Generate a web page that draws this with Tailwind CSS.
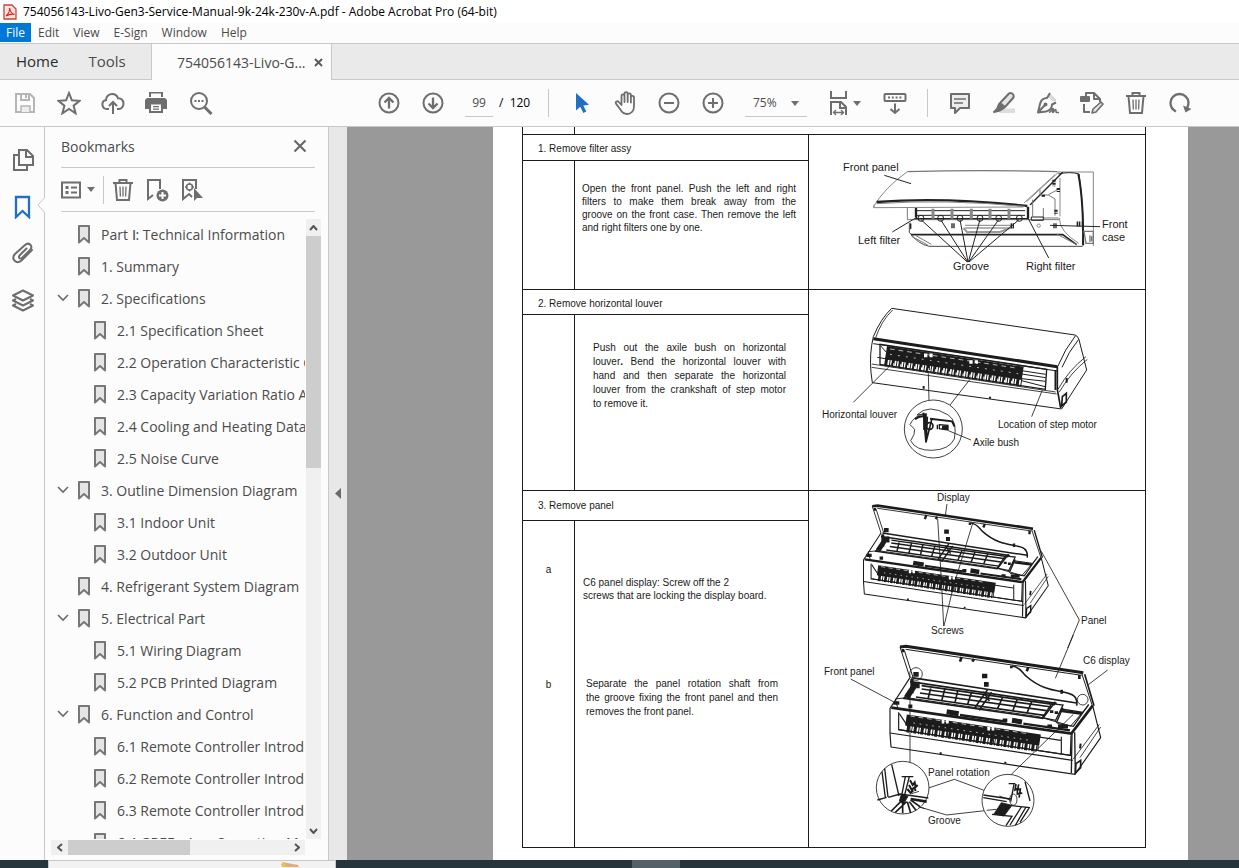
<!DOCTYPE html>
<html lang="en">
<head>
    <meta charset="UTF-8">
    <meta name="viewport" content="width=device-width, initial-scale=1.0">
    <title>754056143-Livo-Gen3-Service-Manual-9k-24k-230v-A.pdf - Adobe Acrobat Pro (64-bit)</title>
    <script src="https://cdn.jsdelivr.net/npm/@tailwindcss/browser@4"></script>
</head>
<body class="flex h-screen flex-col overflow-hidden bg-[#fcfcfc] font-['Open_Sans',sans-serif] text-[#4b4b4b]">

    <!-- Shared symbols -->
    <svg class="hidden">
        <symbol id="bookmark" viewBox="0 0 12 19"><path d="M1 1h10v16.500l-5-4.500-5 4.500z" fill="#e4e4e4" stroke="#777" stroke-width="2" stroke-linejoin="round"/></symbol>
        <symbol id="chevron" viewBox="0 0 12 8"><path d="M1 1l5 5 5-5" fill="none" stroke="#6a6a6a" stroke-width="1.600"/></symbol>
        <symbol id="trash" viewBox="0 0 24 24"><g fill="none" stroke="#6e6e6e" stroke-width="2"><path d="M2 5h20M8.500 4.500V2h7v2.500M4.500 5l1.500 17h12l1.500-17"/><path d="M9 8.500l.4 10M12 8.500v10M15 8.500l-.4 10" stroke-width="1.300"/></g></symbol>

        <!-- Open indoor unit, used in both step 3 drawings -->
        <symbol id="open-unit" viewBox="0 0 1035 460" overflow="visible">
            <g fill="none" stroke="#1c1c1c" stroke-width="3.500">
                <path d="M270 36l18-2 532 79" stroke-width="9"/>
                <path d="M287 43l528 78" stroke-width="3"/>
                <path d="M270 36l30 92M283 46l27 84M815 115l32 97" stroke-width="3"/>
                <path d="M824 118l28 94" stroke-width="5"/>
                <path d="M606 93c26 4 30 20 42 30 40 36 78 42 106 47 32 6 50 12 46 42" stroke-width="5"/>
                <path d="M455 66l-5 14M492 72l-5 8M655 97l-5 12M604 92v8M808 120v12M755 164v12M279 42v10" stroke-width="8"/>
                <!-- intake grille -->
                <path d="M305 128l495 76M300 140l440 65" stroke-width="5"/>
                <path d="M335 152l400 57M335 162l390 54M330 174l380 53M318 186l385 55" stroke-width="5"/>
                <path d="M320 142l-38 48 416 60 38-50" stroke-width="5"/>
                <path d="M318 145l-28 42" stroke-width="17"/>
                <path d="M362 160l-8 32M405 160l-10 38M443 168l-8 35M485 170l-12 38M578 186l-15 34M622 192l-14 36M665 200l-14 34" stroke-width="5"/>
                <path d="M532 165l-38 54M545 172l-38 54M520 170l18 28" stroke-width="5"/>
                <path d="M516 123h16M522 148h14M310 118h16" stroke-width="14"/>
                <path d="M306 132v43M324 140v20" stroke-width="10"/>
                <path d="M725 206l-28 42 40 8 22-46zM759 218l-20 46M752 222l68 10M742 266l48 8 46-66" stroke-width="4"/>
                <path d="M756 228l60 8M720 230h10M734 233h10" stroke-width="8"/>
                <path d="M300 128l-60 92v75l3 42"/>
                <path d="M244 218l540 78 64-84" stroke-width="8"/>
                <path d="M264 222l-8-30 34-4 396 57 96 28 54-62" stroke-width="3"/>
                <path d="M250 204h18M295 214h12M578 256h14M712 274h14M744 275h30" stroke-width="11"/>
                <path d="M410 230l36 6M606 256l30 5" stroke-width="15"/>
                <path d="M450 240l140 20M640 266l140 20" stroke-width="7"/>
                <!-- outlet with guide blades -->
                <path d="M266 232v52l515 77 2-60"/>
                <path d="M288 255l402 60" stroke-width="34"/>
                <path d="M291 276l392 59" stroke-width="32" stroke-dasharray="9 5 3 4"/>
                <path d="M300 243l360 54" stroke="#fff" stroke-width="2" stroke-dasharray="14 12"/>
                <path d="M310 264l350 52" stroke="#fff" stroke-width="2" stroke-dasharray="5 14"/>
                <path d="M395 260h22M532 281h22" stroke="#fff" stroke-width="11" stroke-dasharray="8 5"/>
                <path d="M268 236l28 42M680 305l72 11M754 305v50M412 270v35M550 290v35M684 300v44M266 284l520 78"/>
                <path d="M240 294l548 82M243 336l552 82 77-110-24-96"/>
                <path d="M786 296l-2 118M794 292l2 124" stroke-width="4"/>
                <path d="M868 268l-78 104M872 276l-62 92" stroke-width="2.500"/>
                <path d="M812 326l-2 14M392 352v8M586 380v6" stroke-width="6"/>
                <path d="M798 386l14-10v22l-16 16z" stroke-width="5"/>
            </g>
        </symbol>
    </svg>

    <!-- Title bar -->
    <header class="flex h-[23px] shrink-0 items-center gap-[6px] bg-white pl-[3px] text-black">
        <svg class="h-4 w-[14px]" viewBox="0 0 14 16"><path d="M1 1h8l4 4v10H1z" fill="#fbe3df" stroke="#c5473c" stroke-width="1.300"/><path d="M3 12c2-1.500 4-5 3.500-8 .5 3 2 5.500 5 6.500-3-.8-6 .2-8.500 1.500z" fill="none" stroke="#d0281c" stroke-width="1.200"/></svg>
        <h1 class="text-[12px] leading-4 whitespace-nowrap">754056143-Livo-Gen3-Service-Manual-9k-24k-230v-A.pdf - Adobe Acrobat Pro (64-bit)</h1>
    </header>

    <!-- Menu bar -->
    <nav class="flex h-[20px] shrink-0 items-start text-[12px] leading-[19px]">
        <button class="bg-[#0078d7] px-[6px] text-white">File</button>
        <button class="px-[7px]">Edit</button>
        <button class="px-[7px]">View</button>
        <button class="px-[7px]">E-Sign</button>
        <button class="px-[7px]">Window</button>
        <button class="px-[7px]">Help</button>
    </nav>

    <!-- Tabs -->
    <div class="flex h-[37px] shrink-0 border-t border-[#c8c8c8] bg-[#eaeaea] text-[14px]">
        <div class="flex w-[152px] items-center gap-[30px] border-r border-b border-[#c8c8c8] pl-4 text-[15px]">
            <button class="text-[#2c2c2c]">Home</button>
            <button>Tools</button>
        </div>
        <div class="flex w-[179px] items-center justify-between bg-[#fcfcfc] pr-2 pl-[25px]">
            <span>754056143-Livo-G...</span>
            <button aria-label="Close tab"><svg class="size-[9px]" viewBox="0 0 9 9"><path d="M1 1l7 7M8 1L1 8" stroke="#5c5c5c" stroke-width="2"/></svg></button>
        </div>
        <div class="flex-1 border-b border-l border-[#c8c8c8]"></div>
    </div>

    <!-- Toolbar -->
    <div class="flex h-[47px] shrink-0 items-center border-b border-[#c8c8c8] pl-[3px] text-[12px]">
        <button class="flex w-11 justify-center" aria-label="Save"><svg class="size-6" viewBox="0 0 24 24" fill="none" stroke="#b5b5b5" stroke-width="2"><path d="M3 3h14l4 4v14H3z"/><path d="M8 3v6h8V3M13 4v3"/><path d="M8 21v-6h9v6" fill="#eee" stroke-width="1.500"/></svg></button>
        <button class="flex w-11 justify-center" aria-label="Star"><svg class="size-6" viewBox="0 0 24 24" fill="none" stroke="#6e6e6e" stroke-width="2"><path d="M12 2l2.900 7.300 7.700.5-6 4.900 2 7.600L12 18l-6.600 4.300 2-7.600-6-4.900 7.700-.5z"/></svg></button>
        <button class="flex w-11 justify-center" aria-label="Upload"><svg class="size-6" viewBox="0 0 24 24" fill="none" stroke="#6e6e6e" stroke-width="2"><path d="M8 18H6a4.500 4.500 0 0 1-1-8.900C4.800 5.500 8 3 11.200 3c3 0 5 1.800 5.800 4.300 3-.3 5.500 2 5.500 5.200S20.300 18 18 18h-2"/><path d="M12 23V11M8 15l4-4 4 4"/></svg></button>
        <button class="flex w-11 justify-center" aria-label="Print"><svg class="size-6" viewBox="0 0 24 24" fill="#6e6e6e"><path d="M4 1h14v5H4zM2 7h18l2 2v9h-4v-5H4v5H0V9z"/><path d="M6 2.500h10V7H6z" fill="#fcfcfc"/><path d="M4 13h14v9H4z"/><path d="M6 13.500h10V20H6z" fill="#fcfcfc"/><path d="M8 15h6v1.200H8zM8 17.500h6v1.200H8z"/></svg></button>
        <button class="flex w-11 justify-center" aria-label="Find"><svg class="size-6" viewBox="0 0 24 24" fill="none" stroke="#6e6e6e" stroke-width="2"><circle cx="10" cy="10" r="8"/><path d="M15.500 16l7 7" stroke-width="3"/><path d="M5.500 10h9" stroke-dasharray="2 1.500"/></svg></button>

        <button class="ml-[144px] flex w-11 justify-center" aria-label="Previous page"><svg class="size-6" viewBox="0 0 24 24" fill="none" stroke="#6e6e6e" stroke-width="2"><circle cx="12" cy="12" r="9.500"/><path d="M12 17.500V7M7.500 11.500L12 7l4.500 4.500" stroke-width="2.300"/></svg></button>
        <button class="flex w-11 justify-center" aria-label="Next page"><svg class="size-6" viewBox="0 0 24 24" fill="none" stroke="#6e6e6e" stroke-width="2"><circle cx="12" cy="12" r="9.500"/><path d="M12 6.500V17M7.500 12.500L12 17l4.500-4.500" stroke-width="2.300"/></svg></button>
        <input class="ml-[10px] h-[28px] w-7 border-b border-[#c8c8c8] text-center" aria-label="Page number" value="99">
        <span class="ml-[6px] w-[49px] whitespace-pre text-black">/  120</span>
        <span class="h-7 w-px bg-[#c8c8c8]"></span>
        <button class="ml-[10px] flex w-11 justify-center" aria-label="Select"><svg class="size-6" viewBox="0 0 24 24"><path d="M7 2v17.500l4.300-3.800 3 6.300 3-1.400-3-6.200 5.700-.6z" fill="#1f70c1"/></svg></button>
        <button class="flex w-11 justify-center" aria-label="Pan"><svg class="size-6" viewBox="0 0 24 24" fill="none" stroke="#6e6e6e" stroke-width="1.800" stroke-linejoin="round" stroke-linecap="round"><path d="M8.500 14V5c0-2.300 3-2.300 3 0v6V2.800c0-2.300 3.200-2.300 3.200 0V11 4c0-2.300 3.200-2.300 3.200 0v7.500-5c0-2.200 3.100-2.200 3.100 0V15c0 5-3 8-7 8-3.500 0-5-1.500-6.500-4.200L3 12.600c-1-2 1.500-3.200 2.800-1.600z"/></svg></button>
        <button class="flex w-11 justify-center" aria-label="Zoom out"><svg class="size-6" viewBox="0 0 24 24" fill="none" stroke="#6e6e6e" stroke-width="2"><circle cx="12" cy="12" r="9.500"/><path d="M7 12h10"/></svg></button>
        <button class="flex w-11 justify-center" aria-label="Zoom in"><svg class="size-6" viewBox="0 0 24 24" fill="none" stroke="#6e6e6e" stroke-width="2"><circle cx="12" cy="12" r="9.500"/><path d="M7 12h10M12 7v10"/></svg></button>
        <div class="relative ml-[10px] w-[62px]">
            <select class="h-[28px] w-full appearance-none border-b border-[#c8c8c8] pl-2" aria-label="Zoom"><option>75%</option><option>100%</option></select>
            <svg class="pointer-events-none absolute top-3 right-2 h-[5px] w-2" viewBox="0 0 8 5"><path d="M0 0h8L4 5z" fill="#6e6e6e"/></svg>
        </div>
        <button class="ml-[22px] flex w-8 items-center justify-between" aria-label="Fit page">
            <svg class="h-[26px] w-[19px]" viewBox="0 0 19 26" fill="none" stroke="#6e6e6e" stroke-width="2"><path d="M2 1v7h15V1M2 25V12h10l5 5v8M11 12v6h6"/><path d="M4 22.500h11M7 20l-2.500 2.500L7 25M12 20l2.500 2.500L12 25" stroke-width="1.300"/></svg>
            <svg class="h-[5px] w-2" viewBox="0 0 8 5"><path d="M0 0h8L4 5z" fill="#6e6e6e"/></svg>
        </button>
        <button class="ml-3 flex w-11 justify-center" aria-label="Reading mode"><svg class="size-6" viewBox="0 0 24 24" fill="none" stroke="#6e6e6e" stroke-width="2"><rect x="1.500" y="3" width="21" height="7" rx="1"/><path d="M5 6.500h15" stroke-dasharray="2 1.800"/><path d="M12 12.500V22M7.500 18l4.500 4 4.500-4"/></svg></button>
        <span class="ml-[10px] h-7 w-px bg-[#c8c8c8]"></span>
        <button class="ml-[10px] flex w-11 justify-center" aria-label="Comment"><svg class="size-6" viewBox="0 0 24 24" fill="#ededed" stroke="#6e6e6e" stroke-width="2" stroke-linejoin="round"><path d="M3 3h18v14h-9l-5 5v-5H3z"/><path d="M6 8h12M6 12h9" stroke-width="1.300"/></svg></button>
        <button class="flex w-11 justify-center" aria-label="Highlight"><svg class="size-6" viewBox="0 0 24 24" fill="none" stroke="#6e6e6e" stroke-width="2" stroke-linejoin="round"><path d="M10 17.500h13V22H7z" fill="#ddd" stroke="none"/><path d="M8 12l8.500-9c2-2 6-.5 5 3.500L13 16z" fill="#e4e4e4"/><path d="M7 13l5 4-4 2.500L2 21l3-3z" fill="#6e6e6e"/></svg></button>
        <button class="flex w-11 justify-center" aria-label="Sign"><svg class="size-6" viewBox="0 0 24 24" fill="none" stroke="#6e6e6e" stroke-width="2" stroke-linejoin="round"><path d="M14 3l6 6-3 1-5-5z" fill="#ddd" stroke="#ccc" stroke-width="1"/><path d="M14 2l-3 5c-4 0-6 2-7 6l-2 8.500 8-1c4-1 6-3 6-7l4-2M2 21.500l6.500-7"/><circle cx="9.500" cy="13.500" r="1"/><path d="M13 21.500c3-1 3-4 4-4s-1 4 0 4 1.500-3 2.500-3 0 3 1 3H23" stroke-width="1.600"/></svg></button>
        <button class="flex w-11 justify-center" aria-label="Edit PDF"><svg class="size-6" viewBox="0 0 24 24" fill="none" stroke="#6e6e6e" stroke-width="2" stroke-linejoin="round"><path d="M6 5V2h8l6 6v3M14 2v6h5M4 13v8h6"/><rect x="1" y="6" width="8" height="4" fill="#6e6e6e"/><path d="M12 22l1-4 8-7 2 2-7 8z" fill="#e4e4e4" stroke-width="1.600"/></svg></button>
        <button class="flex w-11 justify-center" aria-label="Delete"><svg class="size-6"><use href="#trash"/></svg></button>
        <button class="flex w-11 justify-center" aria-label="Rotate"><svg class="size-6" viewBox="0 0 24 24" fill="none" stroke="#6e6e6e" stroke-width="2.300"><path d="M8 20.500C4 18.500 2.500 15 2.500 12c0-5 4-9 9-9s9 4 9 8.500c0 2-.5 4-1.500 5.500"/><path d="M15 14.500l2.500 7 6-3.500z" fill="#6e6e6e" stroke="none"/></svg></button>
    </div>

    <!-- Workspace -->
    <main class="flex min-h-0 flex-1">
        <nav class="relative flex w-[45px] shrink-0 flex-col items-center gap-[23px] border-r border-[#c8c8c8] pt-[21px] pl-px">
            <button aria-label="Page thumbnails"><svg class="size-6" viewBox="0 0 24 24" fill="none" stroke="#6e6e6e" stroke-width="2"><path d="M8 2h8l6 6v9H8zM15 2v7h7M7 7H3v15h13v-4"/></svg></button>
            <button aria-label="Bookmarks"><svg class="size-6" viewBox="0 0 24 24" fill="none" stroke="#1f70c1" stroke-width="2.300"><path d="M5 2h13v20l-6.500-6L5 22z"/></svg></button>
            <button aria-label="Attachments"><svg class="size-6" viewBox="0 0 24 24" fill="none" stroke="#6e6e6e" stroke-width="2" stroke-linecap="round"><path d="M15.500 6.500l-7 7c-1.500 2 .5 4 2.500 2.500l8-8c3.500-4-1-8.500-5-5L4 12c-4.500 5 1.500 11 6.500 6.500L21 8"/></svg></button>
            <button aria-label="Layers"><svg class="size-6" viewBox="0 0 24 24" fill="none" stroke="#6e6e6e" stroke-width="2" stroke-linejoin="round"><path d="M12 1.500l10 5-10 5-10-5z"/><path d="M5 10l-3 1.500 10 5 10-5-3-1.500M5 15l-3 1.500 10 5 10-5-3-1.500"/></svg></button>
            <svg class="absolute top-[70px] -right-px h-4 w-2" viewBox="0 0 8 16"><path d="M8 0L1 8l7 8" fill="#fcfcfc" stroke="#c8c8c8"/></svg>
        </nav>

        <aside class="flex w-[284px] shrink-0 flex-col border-r border-[#c8c8c8]">
            <div class="mr-[13px] ml-4 flex h-[41px] items-center justify-between border-b border-[#c8c8c8] pr-2 pb-[2px]">
                <h2 class="text-[14px]">Bookmarks</h2>
                <button aria-label="Close panel"><svg class="size-[14px]" viewBox="0 0 14 14"><path d="M1.500 1.500l11 11M12.500 1.500l-11 11" stroke="#6a6a6a" stroke-width="2.200"/></svg></button>
            </div>
            <div class="mr-[13px] ml-4 flex h-[44px] items-center border-b border-[#c8c8c8]">
                <button class="flex items-center gap-[6px]" aria-label="Options">
                    <svg class="h-[18px] w-5" viewBox="0 0 20 18" fill="none" stroke="#6e6e6e" stroke-width="2"><path d="M1 1.500h18v15H1z"/><path d="M4.500 6.500h3M4.500 11.500h3" stroke-width="3"/><path d="M10 6.500h6M10 11.500h6"/></svg>
                    <svg class="h-[5px] w-2" viewBox="0 0 8 5"><path d="M0 0h8L4 5z" fill="#6e6e6e"/></svg>
                </button>
                <span class="ml-2 h-7 w-px bg-[#c8c8c8]"></span>
                <button class="ml-[7px]" aria-label="Delete bookmark"><svg class="size-6"><use href="#trash"/></svg></button>
                <button class="ml-[10px]" aria-label="New bookmark"><svg class="size-6" viewBox="0 0 24 24"><path d="M15 11V2H3v19l5-4" fill="none" stroke="#6e6e6e" stroke-width="2"/><circle cx="17.500" cy="17.500" r="6" fill="#6e6e6e"/><path d="M14 17.500h7M17.500 14v7" stroke="#fff" stroke-width="2"/></svg></button>
                <button class="ml-[11px]" aria-label="Find current bookmark"><svg class="size-6" viewBox="0 0 24 24"><g fill="none" stroke="#6e6e6e" stroke-width="2"><path d="M16 11V2H3v19l6-5 3 3"/><circle cx="9.500" cy="9" r="3" stroke-width="1.500"/><path d="M9.500 4.500V7M9.500 11v2.500M5 9h2.500M11.500 9H14" stroke-width="1.300"/></g><path d="M14 10v13l3-3h6z" fill="#6e6e6e"/></svg></button>
            </div>

            <div class="mt-[7px] mr-[7px] ml-[6px] flex min-h-0 flex-1">
                <ul id="bookmark-list" class="mr-px min-w-0 flex-1 overflow-hidden text-[14px]"></ul>
                <div class="flex w-[15px] shrink-0 flex-col items-center bg-[#f0f0f0]">
                    <button class="flex h-[17px] items-center" aria-label="Scroll up"><svg class="h-[6px] w-[9px]" viewBox="0 0 9 6"><path d="M1 5l3.500-4L8 5" fill="none" stroke="#555" stroke-width="2"/></svg></button>
                    <span class="h-[232px] w-full bg-[#cdcdcd]"></span>
                    <button class="mt-auto flex h-[17px] items-center" aria-label="Scroll down"><svg class="h-[6px] w-[9px]" viewBox="0 0 9 6"><path d="M1 1l3.500 4L8 1" fill="none" stroke="#555" stroke-width="2"/></svg></button>
                </div>
            </div>
            <div class="mt-px mr-[23px] mb-[5px] ml-[6px] flex h-[15px] shrink-0 items-center bg-[#f0f0f0]">
                <button class="flex w-[17px] justify-center" aria-label="Scroll left"><svg class="h-[9px] w-[6px]" viewBox="0 0 6 9"><path d="M5 1L1 4.500 5 8" fill="none" stroke="#555" stroke-width="2"/></svg></button>
                <span class="h-full w-[122px] bg-[#cdcdcd]"></span>
                <button class="ml-auto flex w-[17px] justify-center" aria-label="Scroll right"><svg class="h-[9px] w-[6px]" viewBox="0 0 6 9"><path d="M1 1l4 3.500L1 8" fill="none" stroke="#555" stroke-width="2"/></svg></button>
            </div>
        </aside>

        <button class="flex w-[18px] shrink-0 items-center justify-center bg-[#e8e8e8]" aria-label="Collapse panel"><svg class="h-[11px] w-[6px]" viewBox="0 0 6 11"><path d="M6 0v11L0 5.500z" fill="#6a6a6a"/></svg></button>

        <!-- Document -->
        <section class="min-w-0 flex-1 overflow-hidden bg-[#999] pr-[51px] pl-[146px]">
            <div class="h-full bg-white pr-[42px] pl-[29px] font-['Liberation_Sans',Arial,sans-serif] text-[10px] text-[#1a1a1a]">
                <table class="w-full table-fixed border-collapse">
                    <colgroup><col class="w-[52px]"><col class="w-[234px]"><col></colgroup>
                    <tbody>
                        <tr class="h-[7px]">
                            <td class="border border-t-0 border-[#1c1c1c] p-0"></td>
                            <td class="border border-t-0 border-[#1c1c1c] p-0" colspan="2"></td>
                        </tr>
                        <tr class="h-[26px]">
                            <td class="border border-[#1c1c1c] pt-[2px] pr-0 pb-0 pl-[15px]" colspan="2">1. Remove filter assy</td>
                            <td class="border border-[#1c1c1c] p-0 align-top" rowspan="2">
                                <svg class="block h-[154px] w-[336px]" viewBox="809 135 336 154">
                                    <g transform="translate(810 128) scale(.33333)" fill="none" stroke="#222" stroke-width="3">
                                        <path d="M742 132h108v222" stroke="#888"/>
                                        <path d="M292 131q225-6 450 0" stroke="#777" stroke-width="4"/>
                                        <path d="M292 131q-70 50-102 106M745 133l-95 88M735 140l-92 84" stroke="#888"/>
                                        <path d="M200 222q200-16 452 12" stroke-width="7"/>
                                        <path d="M200 227q200-14 445 8M190 239l450-2M192 230v10" stroke="#888"/>
                                        <path d="M758 133l-98 98" stroke-width="4"/>
                                        <path d="M745 138q35-8 62 0 14 100 14 214"/>
                                        <path d="M805 138q16 80 14 214" stroke-width="6"/>
                                        <path d="M750 150v115M748 270q0 40 58 76" stroke="#888"/>
                                        <path d="M292 240v35h455M318 240v34" stroke="#777"/>
                                        <path d="M320 248h325M320 262h325" stroke-width="3"/>
                                        <path d="M316 272h340" stroke-width="4"/>
                                        <path d="M318 240v28M654 236v34" stroke-width="7"/>
                                        <path d="M369 242v30M426 242v30M484 242v30M540 242v30M597 242v30" stroke="#888" stroke-width="9"/>
                                        <path d="M668 215v50M690 185v16h25l20 12v50M715 200l30-16M700 240v30h46" stroke="#777"/>
                                        <path d="M732 155v20M745 180v12M700 200v8M738 245v12" stroke-width="10" stroke-dasharray="6 3"/>
                                        <path d="M664 267h36v10h-36z"/>
                                        <g><circle cx="333" cy="271" r="9"/><circle cx="392" cy="271" r="9"/><circle cx="450" cy="271" r="9"/><circle cx="510" cy="271" r="9"/><circle cx="566" cy="271" r="9"/><circle cx="628" cy="271" r="9"/></g>
                                        <path d="M298 285v28q25 35 60 42h460" stroke="#444"/>
                                        <path d="M303 320h455l42 30" stroke-width="5"/>
                                        <path d="M305 325l48 26M318 323l46 26M302 284v20M740 318l60 32" stroke="#777"/>
                                        <path d="M465 292h145M465 300h145" stroke="#999" stroke-width="4"/>
                                        <path d="M475 312h95l30-12M460 300l15 16" stroke="#999" stroke-width="6"/>
                                        <path d="M424 293h12M602 293h12M730 293h12M800 288h14M300 295h6" stroke-width="15" stroke-dasharray="4 2"/>
                                        <circle cx="686" cy="293" r="5" stroke="#888"/>
                                        <path d="M822 310h28v36h-22zM840 322v20M845 325v15" stroke="#777" stroke-width="4"/>
                                        <path d="M223 142l80 25M247 312l75-45M472 402L333 275M473 402l-81-127M474 402l-24-127M475 402l35-127M476 402l90-127M477 402l150-127M716 390l-62-120M720 292l150 4"/>
                                    </g>
                                    <g font-size="11" fill="#1a1a1a">
                                        <text x="843" y="171">Front panel</text>
                                        <text x="858" y="244">Left filter</text>
                                        <text x="953" y="270">Groove</text>
                                        <text x="1026" y="270">Right filter</text>
                                        <text x="1102" y="228">Front</text>
                                        <text x="1102" y="241">case</text>
                                    </g>
                                </svg>
                            </td>
                        </tr>
                        <tr class="h-[129px]">
                            <td class="border border-[#1c1c1c] p-0"></td>
                            <td class="border border-[#1c1c1c] pt-[21px] pr-3 pb-0 pl-[7px] align-top">
                                <p class="leading-[13px] [text-align-last:justify]">
                                    <span class="block">Open the front panel. Push the left and right</span>
                                    <span class="block">filters to make them break away from the</span>
                                    <span class="block">groove on the front case. Then remove the left</span>
                                    <span class="block [text-align-last:left]">and right filters one by one.</span>
                                </p>
                            </td>
                        </tr>
                        <tr class="h-[25px]">
                            <td class="border border-[#1c1c1c] pt-1 pr-0 pb-0 pl-[15px]" colspan="2">2. Remove horizontal louver</td>
                            <td class="border border-[#1c1c1c] p-0 align-top" rowspan="2">
                                <svg class="block h-[200px] w-[336px]" viewBox="809 290 336 200">
                                    <g transform="translate(810 290) scale(.33333)" fill="none" stroke="#1c1c1c" stroke-width="3">
                                        <path d="M187 278q-10-60-2-112l5-26q22-54 55-85l550 80q8 2 12 14l23 91-75 117z"/>
                                        <path d="M248 60q-34 32-52 86" stroke-width="2.500"/>
                                        <path d="M190 146l552 84" stroke-width="9"/>
                                        <path d="M190 161l552 82M744 228q20-50 52-90M756 232q20-48 50-84" stroke-width="3"/>
                                        <path d="M742 228v70l10 56M736 240v60" stroke-width="5"/>
                                        <path d="M210 163v60l496 75 4-60z" stroke-width="4"/>
                                        <path d="M228 188l410 62" stroke-width="40"/>
                                        <path d="M224 215l412 62" stroke-width="26" stroke-dasharray="9 5 3 4"/>
                                        <path d="M240 177l385 58" stroke="#fff" stroke-width="2" stroke-dasharray="14 12"/>
                                        <path d="M240 193l385 58" stroke="#fff" stroke-width="2" stroke-dasharray="6 18"/>
                                        <path d="M342 196h28M478 216h28" stroke="#fff" stroke-width="11" stroke-dasharray="10 6"/>
                                        <path d="M250 223l360 54" stroke="#fff" stroke-width="8" stroke-dasharray="3 18"/>
                                        <path d="M212 168l20 22M202 202l35 6M358 200v40M496 220v45M635 242l72 11M635 252l72 11M635 266l72 8M635 272l70 18"/>
                                        <path d="M185 222l552 84M185 232l555 80M828 200q-50 38-84 98M832 208q-50 40-84 98" stroke-width="2.500"/>
                                        <path d="M770 264v14M341 288v8M540 320v6" stroke-width="6"/>
                                        <path d="M757 320l12-10v26l-14 12z" stroke-width="5"/>
                                        <path d="M130 337l122-122M355 250l2 80M480 268l-60 77M697 300l-32 80M415 422l68 28" stroke-width="2.500"/>
                                        <circle cx="370" cy="417" r="87" stroke-width="2.500"/>
                                        <path d="M342 372q-30 5-42 32l14 14q2 14-12 34 15 30 65 29 50-2 66-34 10-52-18-72-60-36-94 0z" stroke-width="2.500"/>
                                        <path d="M315 388q15-12 30-8M360 386l66 8 8 16" stroke-width="6"/>
                                        <path d="M340 368l8 90M352 380l-4 76M366 386l-18 70" stroke-width="5"/>
                                        <path d="M345 370v50" stroke-width="11"/>
                                        <circle cx="359" cy="408" r="10" stroke-width="5"/>
                                        <path d="M382 404v14M388 404l26 2v14l-26-4z" stroke-width="4"/>
                                        <path d="M396 412h18" stroke-width="11"/>
                                    </g>
                                    <g font-size="10" fill="#1a1a1a">
                                        <text x="822" y="418">Horizontal louver</text>
                                        <text x="998" y="428">Location of step motor</text>
                                        <text x="973" y="446">Axile bush</text>
                                    </g>
                                </svg>
                            </td>
                        </tr>
                        <tr class="h-[176px]">
                            <td class="border border-[#1c1c1c] p-0"></td>
                            <td class="border border-[#1c1c1c] pt-[26px] pr-[22px] pb-0 pl-[18px] align-top">
                                <p class="leading-[14px] [text-align-last:justify]">
                                    <span class="block">Push out the axile bush on horizontal</span>
                                    <span class="block">louver<b>.</b> Bend the horizontal louver with</span>
                                    <span class="block">hand and then separate the horizontal</span>
                                    <span class="block">louver from the crankshaft of step motor</span>
                                    <span class="block [text-align-last:left]">to remove it.</span>
                                </p>
                            </td>
                        </tr>
                        <tr class="h-[30px]">
                            <td class="border border-[#1c1c1c] py-0 pr-0 pl-[15px]" colspan="2">3. Remove panel</td>
                            <td class="border border-[#1c1c1c] p-0 align-top" rowspan="3">
                                <svg class="block h-[356px] w-[336px]" viewBox="809 491 336 356">
                                    <g transform="translate(810 488) scale(.33333)" fill="none" stroke="#1c1c1c" stroke-width="2.500">
                                        <g transform="translate(-50 23) scale(.877)"><use href="#open-unit" width="1035" height="460"/></g>
                                        <path d="M411 48l-5 34M383 92l12 200 6 122M488 106l-58 190-28 118M694 190l114 206-35 84"/>
                                    </g>
                                    <g transform="translate(810 635) scale(.33333)" fill="none" stroke="#1c1c1c" stroke-width="2.500">
                                        <use href="#open-unit" width="1035" height="460"/>
                                        <path d="M790 0l-54 130M893 105l-58 44M122 132l128 68M300 175v208M790 238L604 418M305 476l128-43 165 61M325 515l85 25 150-17"/>
                                        <circle cx="318" cy="117" r="19"/><circle cx="818" cy="194" r="16"/>
                                        <circle cx="278" cy="458" r="79" fill="#fff"/>
                                        <path d="M224 400l10 86M216 410l10 78M245 388l22 95M230 487l-28 8M235 487l35-10 85 12" stroke-width="4"/>
                                        <path d="M302 492l48 8" stroke-width="8"/>
                                        <path d="M286 425l-12 62M298 425l-18 70M275 425h35" stroke-width="4"/>
                                        <path d="M300 436l8 14 6-8 3 14 6-6M297 450l8 14 8-6 4 10M292 462l10 12 8-8" stroke-width="6"/>
                                        <path d="M282 490l-38 38M290 500l-34 32M278 505v30M292 500l10 34M298 500l20 26M302 495l28 20" stroke-width="5"/>
                                        <path d="M274 478l20 6-14 24-12-10z" fill="#1c1c1c"/>
                                        <circle cx="594" cy="496" r="78" fill="#fff"/>
                                        <path d="M520 480l82 12M520 488l70 12M602 500l10-52M596 446h20M645 440l15 58" stroke-width="4"/>
                                        <path d="M618 447l-3 18 7-4 0 16 8-3-3 14M626 448l-3 16 8-2-2 14 8-2" stroke-width="5"/>
                                        <ellipse cx="610" cy="494" rx="11" ry="17"/>
                                        <path d="M574 503l32 8-24 32-30-6z" fill="#1c1c1c"/>
                                        <path d="M546 538l60 6-18 28M606 512l54 6M634 516l-34 54M648 516l-32 55M658 518l-28 44" stroke-width="4"/>
                                        <path d="M305 476l22-7M598 494l-30-11M325 515l20 6M560 523l-30 3"/>
                                    </g>
                                    <g font-size="10" fill="#1a1a1a">
                                        <text x="937" y="501">Display</text>
                                        <text x="931" y="634">Screws</text>
                                        <text x="1081" y="624">Panel</text>
                                        <text x="824" y="675">Front panel</text>
                                        <text x="1083" y="664">C6 display</text>
                                        <text x="928" y="776">Panel rotation</text>
                                        <text x="928" y="824">Groove</text>
                                    </g>
                                </svg>
                            </td>
                        </tr>
                        <tr class="h-[120px]">
                            <td class="border-x border-[#1c1c1c] px-0 pt-[41px] pb-0 text-center align-top">a</td>
                            <td class="border-x border-[#1c1c1c] pt-[55px] pr-0 pb-0 pl-2 align-top">
                                <p class="leading-[13px]">C6 panel display: Screw off the 2<br>screws that are locking the display board.</p>
                            </td>
                        </tr>
                        <tr class="h-[207px]">
                            <td class="border-x border-b border-[#1c1c1c] px-0 pt-[37px] pb-0 text-center align-top">b</td>
                            <td class="border-x border-b border-[#1c1c1c] pt-[37px] pr-[30px] pb-0 pl-[11px] align-top">
                                <p class="leading-[14px] [text-align-last:justify]">
                                    <span class="block">Separate the panel rotation shaft from</span>
                                    <span class="block">the groove fixing the front panel and then</span>
                                    <span class="block [text-align-last:left]">removes the front panel.</span>
                                </p>
                            </td>
                        </tr>
                    </tbody>
                </table>
            </div>
        </section>
    </main>

    <!-- Taskbar -->
    <footer class="flex h-2 shrink-0 bg-[#26343b]">
        <div class="ml-12 flex w-72 justify-end border-t border-r border-l border-[#c8c8c8] bg-[#f2f2f2] pr-9">
            <svg class="h-[6px] w-[18px]" viewBox="0 0 18 6"><path d="M1 1l16 3 1 2H5z" fill="#e8a878"/><path d="M0 3l3-2 3 5H1z" fill="#e9c34b"/></svg>
        </div>
        <div class="ml-[296px] w-12 bg-[#546067]"></div>
    </footer>

    <script>
        // level 0 = chapter, level 1 = section; open marks an expanded chapter
        const bookmarks = [
            { text: 'Part Ⅰ: Technical Information', level: 0 },
            { text: '1. Summary', level: 0 },
            { text: '2. Specifications', level: 0, open: true },
            { text: '2.1 Specification Sheet', level: 1 },
            { text: '2.2 Operation Characteristic Curve', level: 1 },
            { text: '2.3 Capacity Variation Ratio According to Temperature', level: 1 },
            { text: '2.4 Cooling and Heating Data Sheet', level: 1 },
            { text: '2.5 Noise Curve', level: 1 },
            { text: '3. Outline Dimension Diagram', level: 0, open: true },
            { text: '3.1 Indoor Unit', level: 1 },
            { text: '3.2 Outdoor Unit', level: 1 },
            { text: '4. Refrigerant System Diagram', level: 0 },
            { text: '5. Electrical Part', level: 0, open: true },
            { text: '5.1 Wiring Diagram', level: 1 },
            { text: '5.2 PCB Printed Diagram', level: 1 },
            { text: '6. Function and Control', level: 0, open: true },
            { text: '6.1 Remote Controller Introduction', level: 1 },
            { text: '6.2 Remote Controller Introduction', level: 1 },
            { text: '6.3 Remote Controller Introduction', level: 1 },
            { text: '6.4 GREE+ App Operation Manual', level: 1 }
        ];

        document.getElementById('bookmark-list').innerHTML = bookmarks.map(b => `
            <li class="flex h-8 items-center pb-[2px] whitespace-nowrap ${b.level ? 'pl-[43px]' : 'pl-[6px]'}">
                ${b.level ? '' : `<span class="w-[21px] shrink-0">${b.open ? '<button class="block" aria-label="Collapse"><svg class="h-2 w-3"><use href="#chevron"/></svg></button>' : ''}</span>`}
                <svg class="mr-[11px] h-[19px] w-3 shrink-0"><use href="#bookmark"/></svg>
                <a href="#">${b.text}</a>
            </li>`).join('');
    </script>
</body>
</html>
